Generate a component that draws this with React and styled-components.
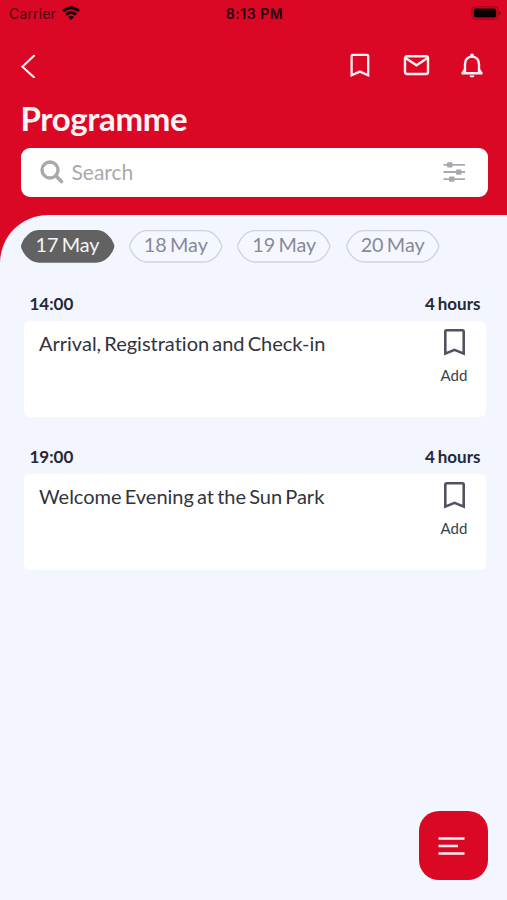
import React from "react";
import styled, { createGlobalStyle } from "styled-components";

const RED = "#da0824";

const GlobalStyle = createGlobalStyle`
  * { box-sizing: border-box; }
  body { margin: 0; background: #f3f6ff; }
`;

const Screen = styled.div`
  width: 507px;
  height: 900px;
  display: flex;
  flex-direction: column;
  background: ${RED};
  font-family: Lato, sans-serif;
  font-variant-ligatures: none;
  overflow: hidden;
  position: relative;
`;

const StatusBar = styled.div`
  height: 28px;
  flex: none;
  display: grid;
  grid-template-columns: 1fr auto 1fr;
  align-items: center;
  padding: 0 6px 2px 9px;
  font-family: Inter, sans-serif;
  font-size: 14px;
  color: #24030a;
`;

const Carrier = styled.div`
  display: flex;
  align-items: center;
  gap: 6px;
  color: #4c030d;
  letter-spacing: 0.15px;
  svg { display: block; }
`;

const Clock = styled.div`
  font-weight: 600;
  font-size: 14px;
  letter-spacing: 0.55px;
  margin-right: 1px;
  white-space: nowrap;
`;

const Battery = styled.svg`
  justify-self: end;
  display: block;
`;

const NavBar = styled.div`
  height: 76px;
  flex: none;
  display: flex;
  justify-content: space-between;
  align-items: center;
  padding: 0 20px;
  svg { display: block; }
`;

const IconButton = styled.button`
  display: block;
  border: 0;
  padding: 0;
  background: none;
`;

const NavActions = styled.div`
  display: flex;
  gap: 24px;
  margin-right: -1px;
`;

const Title = styled.h1`
  margin: 0 0 0 20.5px;
  height: 44px;
  flex: none;
  font-size: 33px;
  line-height: 28px;
  font-weight: 700;
  color: #fff4f4;
  letter-spacing: -0.35px;
`;

const SearchBar = styled.div`
  flex: none;
  height: 49px;
  margin: 0 19.5px 18px 20.5px;
  padding: 0 22px 0 19px;
  display: flex;
  align-items: center;
  background: #fff;
  border-radius: 9px;
  svg { display: block; margin-bottom: 2px; }
`;

const Placeholder = styled.span`
  flex: 1;
  margin: 0 0 2px 8px;
  font-size: 21px;
  line-height: 26px;
  color: #a9a9ad;
`;

const Sheet = styled.main`
  flex: 1;
  background: #f3f6ff;
  border-top-left-radius: 48px;
  padding: 14.5px 21px 0;
`;

const DateTabs = styled.div`
  display: flex;
  gap: 15px;
  height: 33px;
  margin-left: -0.5px;
`;

const DateTab = styled.div`
  display: grid;
  width: 93.4px;
  height: 33px;
  > * { grid-area: 1 / 1; }
`;

const DateLabel = styled.span`
  position: relative;
  text-align: center;
  font-size: 19.8px;
  line-height: 29px;
  word-spacing: -1.8px;
  color: ${(p) => (p.$active ? "#f4f4f6" : "#858a98")};
`;

const Session = styled.section`
  margin: ${(p) => (p.$first ? "30px" : "29px")} 0 0 3px;
  width: 462px;
`;

const SessionHead = styled.div`
  display: flex;
  justify-content: space-between;
  height: 28px;
  padding: 0 5.5px 0 5.5px;
  font-size: 17px;
  line-height: 21px;
  font-weight: 700;
  word-spacing: -1.2px;
  color: #252835;
`;

const Card = styled.article`
  height: 96px;
  background: #fff;
  border-radius: 6px;
  padding: 8px 11px 0 15px;
  display: flex;
  justify-content: space-between;
`;

const CardTitle = styled.div`
  font-size: 20px;
  line-height: 28px;
  word-spacing: -2px;
  color: #32343d;
  white-space: nowrap;
`;

const AddButton = styled.button`
  border: 0;
  padding: 0;
  background: none;
  width: 42px;
  display: flex;
  flex-direction: column;
  align-items: center;
  font: 15px/20px Lato, sans-serif;
  color: #3d3f48;
  svg { display: block; margin-bottom: 9px; }
`;

const Fab = styled.button`
  position: absolute;
  right: 19.5px;
  bottom: 20px;
  width: 69px;
  height: 69px;
  border: 0;
  border-radius: 20px;
  background: ${RED};
  display: grid;
  place-items: center;
  padding: 0 4px 0 0;
`;

const PillShape = ({ active }) => (
  <svg width="94" height="33" viewBox="0 0 94 33">
    <path
      d="M18 .7H75.400C83 .7 89.500 7 92.300 14.300Q93.100 16.300 92.300 18.300C89.500 25.500 83 32 75.400 32H18C10.400 32 3.900 25.500 1.100 18.300Q.3 16.300 1.100 14.300C3.900 7 10.400 .7 18 .7Z"
      fill={active ? "#626262" : "#f5f7ff"}
      stroke={active ? "#626262" : "#cfd2e0"}
      strokeWidth="1.300"
    />
  </svg>
);

const Bookmark = ({ width, height, stroke, color }) => (
  <svg width={width} height={height} viewBox={`0 0 ${width} ${height}`} fill="none">
    <path
      d={`M${stroke / 2} ${height - 2.4}V2.600Q${stroke / 2} ${stroke / 2} 2.800 ${stroke / 2}H${width - 2.8}Q${width - stroke / 2} ${stroke / 2} ${width - stroke / 2} 2.600V${height - 2.4}L${width / 2} ${height - 6.2}Z`}
      stroke={color}
      strokeWidth={stroke}
    />
  </svg>
);

const days = ["17 May", "18 May", "19 May", "20 May"];
const sessions = [
  { time: "14:00", length: "4 hours", title: "Arrival, Registration and Check-in" },
  { time: "19:00", length: "4 hours", title: "Welcome Evening at the Sun Park" },
];

export default function App() {
  return (
    <Screen>
      <GlobalStyle />
      <StatusBar>
        <Carrier>
          <span>Carrier</span>
          <svg width="18" height="14" viewBox="0 0 18 14" fill="none" stroke="#18020a" strokeWidth="3">
            <path d="M1 5.200Q9-1.800 17 5.200" />
            <path d="M4 8.600Q9 4.200 14 8.600" />
            <path d="M6 11Q9 8.400 12 11L9 13.900Z" fill="#18020a" stroke="none" />
          </svg>
        </Carrier>
        <Clock>8:13 PM</Clock>
        <Battery width="30" height="14" viewBox="0 0 30 14">
          <rect x="1" y=".8" width="26" height="12.400" rx="3.500" fill="none" stroke="#97061b" />
          <rect x="2.800" y="2.500" width="22.400" height="9" rx="2" fill="#0b0002" />
          <path d="M28.300 5V9Q29.700 8.500 29.700 7T28.300 5Z" fill="#7a0616" />
        </Battery>
      </StatusBar>

      <NavBar>
        <IconButton aria-label="Back">
          <svg width="18" height="24" viewBox="0 0 18 24" fill="none" stroke="#fff0f1" strokeWidth="2.100" strokeLinecap="round">
            <path d="M14 2L2.400 12.900L14 23.500" transform="translate(0 -.2)" />
          </svg>
        </IconButton>
        <NavActions>
          <IconButton aria-label="Saved">
            <svg width="32" height="28" viewBox="0 0 32 28" fill="none" stroke="#fff0f1" strokeWidth="2.300">
              <path d="M7.600 23.300V4.200Q7.600 2.900 9.100 2.900H22.700Q24.200 2.900 24.200 4.200V23.300L15.900 19.600Z" />
            </svg>
          </IconButton>
          <IconButton aria-label="Messages">
            <svg width="32" height="28" viewBox="0 0 32 28" fill="none" stroke="#fff0f1" strokeWidth="2.400">
              <rect x="5" y="4.200" width="23" height="17.800" rx="2" />
              <path d="M5.500 6L16.500 13.200L27.500 6" />
            </svg>
          </IconButton>
          <IconButton aria-label="Notifications">
            <svg width="32" height="28" viewBox="0 0 32 28" fill="none" stroke="#fff0f1" strokeWidth="2.400">
              <path d="M5.500 21.200H26.500M9 21V12C9 2.200 23 2.200 23 12V21" />
              <path d="M8.700 18L6.700 21M23.300 18L25.300 21" />
              <circle cx="16" cy="3.300" r="1.900" fill="#fff0f1" stroke="none" />
              <path d="M13.600 23.500H18.400Q18.400 25.600 16 25.600T13.600 23.500Z" fill="#fff0f1" stroke="none" />
            </svg>
          </IconButton>
        </NavActions>
      </NavBar>

      <Title>Programme</Title>

      <SearchBar>
        <svg width="24" height="24" viewBox="0 0 24 24" fill="none" stroke="#a9a9ad">
          <circle cx="10" cy="10" r="8" strokeWidth="3.400" />
          <path d="M16 16L21.500 21.500" strokeWidth="3.600" strokeLinecap="round" />
        </svg>
        <Placeholder>Search</Placeholder>
        <svg width="23" height="22" viewBox="0 0 23 22" fill="#a9a9ad">
          <path d="M.5 3H22V4.800H.5ZM.5 10.100H22V11.900H.5ZM.5 17.200H22V19H.5Z" />
          <rect x="4" y="1.300" width="5.500" height="5.300" rx="1" />
          <rect x="13" y="8.400" width="5.500" height="5.300" rx="1" />
          <rect x="6" y="15.500" width="5.500" height="5.300" rx="1" />
        </svg>
      </SearchBar>

      <Sheet>
        <DateTabs>
          {days.map((day, i) => (
            <DateTab key={day}>
              <PillShape active={i === 0} />
              <DateLabel $active={i === 0}>{day}</DateLabel>
            </DateTab>
          ))}
        </DateTabs>
        {sessions.map((s, i) => (
          <Session key={s.time} $first={i === 0}>
            <SessionHead>
              <span>{s.time}</span>
              <span>{s.length}</span>
            </SessionHead>
            <Card>
              <CardTitle>{s.title}</CardTitle>
              <AddButton>
                <Bookmark width={21} height={27} stroke={2.6} color="#50525f" />
                Add
              </AddButton>
            </Card>
          </Session>
        ))}
      </Sheet>

      <Fab aria-label="Menu">
        <svg width="27" height="20" viewBox="0 0 27 20" fill="none" stroke="#fff0f1" strokeWidth="2.400">
          <path d="M.5 2.500H26.500M.5 10H20M.5 17.500H26.500" />
        </svg>
      </Fab>
    </Screen>
  );
}
